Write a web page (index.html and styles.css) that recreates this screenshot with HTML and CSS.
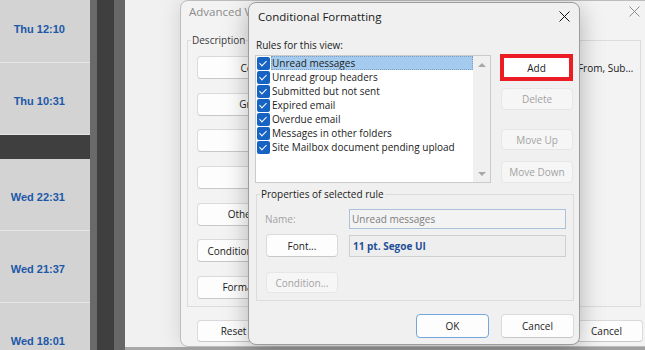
FILE: index.html
```html
<!DOCTYPE html>
<html lang="en">
<head>
  <meta charset="UTF-8" />
  <title>Conditional Formatting</title>
  <link rel="stylesheet" href="styles.css">
</head>
<body>
  <div class="app">
    <div class="msg-list">
      <div class="msg-row"><span class="msg-time">Thu 12:10</span></div>
      <div class="msg-row"><span class="msg-time">Thu 10:31</span></div>
      <div class="msg-group"></div>
      <div class="msg-row"><span class="msg-time">Wed 22:31</span></div>
      <div class="msg-row"><span class="msg-time">Wed 21:37</span></div>
      <div class="msg-row"><span class="msg-time">Wed 18:01</span></div>
    </div>

    <div class="splitter">
      <div class="split-a"></div>
      <div class="split-b"></div>
      <div class="split-c"></div>
    </div>

    <div class="workspace">
      <div class="reading"></div>
      <div class="statusbar"></div>

      <!-- dialog behind -->
      <div class="dialog dlg-advanced">
        <div class="dlg-title inactive">
          <span>Advanced View Settings: Compact</span>
          <svg class="close" width="11" height="11" viewBox="0 0 11 11"><path d="M0.5 0.5 L10.5 10.5 M10.5 0.5 L0.5 10.5" stroke="currentColor" stroke-width="1" fill="none"/></svg>
        </div>
        <div class="adv-body">
          <fieldset class="adv-group">
            <legend>Description</legend>
            <div class="adv-row"><button class="btn adv-btn">Columns...</button><span class="adv-desc">Importance, Reminder, Icon, Flag Status, Attachment, From, Sub…</span></div>
            <div class="adv-row"><button class="btn adv-btn">Group By...</button><span class="adv-desc">None</span></div>
            <div class="adv-row"><button class="btn adv-btn">Sort...</button><span class="adv-desc">Received (descending)</span></div>
            <div class="adv-row"><button class="btn adv-btn">Filter...</button><span class="adv-desc">Off</span></div>
            <div class="adv-row"><button class="btn adv-btn">Other Settings...</button><span class="adv-desc">Fonts and other Compact View settings</span></div>
            <div class="adv-row"><button class="btn adv-btn">Conditional Formatting...</button><span class="adv-desc">User defined fonts</span></div>
            <div class="adv-row"><button class="btn adv-btn">Format Columns...</button><span class="adv-desc">Specify display formats</span></div>
          </fieldset>
          <div class="adv-footer">
            <button class="btn adv-btn">Reset Current View</button>
            <button class="btn footer-btn push">OK</button>
            <button class="btn footer-btn">Cancel</button>
          </div>
        </div>
      </div>

      <!-- active dialog -->
      <div class="dialog dlg-cf">
        <div class="dlg-title">
          <span>Conditional Formatting</span>
          <svg class="close" width="11" height="11" viewBox="0 0 11 11"><path d="M0.5 0.5 L10.5 10.5 M10.5 0.5 L0.5 10.5" stroke="currentColor" stroke-width="1" fill="none"/></svg>
        </div>
        <div class="cf-body">
          <div class="cf-caption">Rules for this view:</div>
          <div class="rules">
            <div class="rule-list">
              <div class="rule-items">
                <div class="rule-item"><span class="check"></span><span class="rule-name selected">Unread messages</span></div>
                <div class="rule-item"><span class="check"></span><span class="rule-name">Unread group headers</span></div>
                <div class="rule-item"><span class="check"></span><span class="rule-name">Submitted but not sent</span></div>
                <div class="rule-item"><span class="check"></span><span class="rule-name">Expired email</span></div>
                <div class="rule-item"><span class="check"></span><span class="rule-name">Overdue email</span></div>
                <div class="rule-item"><span class="check"></span><span class="rule-name">Messages in other folders</span></div>
                <div class="rule-item"><span class="check"></span><span class="rule-name">Site Mailbox document pending upload</span></div>
              </div>
              <div class="scrollbar">
                <span class="arrow-up"></span>
                <span class="arrow-down"></span>
              </div>
            </div>
            <div class="rule-actions">
              <button class="btn btn-add">Add</button>
              <button class="btn disabled btn-delete">Delete</button>
              <button class="btn disabled btn-up">Move Up</button>
              <button class="btn disabled btn-down">Move Down</button>
            </div>
          </div>

          <fieldset class="props">
            <legend>Properties of selected rule</legend>
            <div class="props-grid">
              <span class="props-label">Name:</span>
              <div class="field name-field">Unread messages</div>
              <button class="btn font-btn">Font...</button>
              <div class="field font-field">11 pt. Segoe UI</div>
              <button class="btn disabled cond-btn">Condition...</button>
            </div>
          </fieldset>

          <div class="cf-footer">
            <button class="btn default footer-btn ok-btn">OK</button>
            <button class="btn footer-btn ok-btn">Cancel</button>
          </div>
        </div>
      </div>
    </div>
  </div>
</body>
</html>
```

FILE: styles.css
```css
* {
  box-sizing: border-box;
  margin: 0;
  padding: 0;
}

body {
  width: 645px;
  height: 350px;
  overflow: hidden;
  font-family: "Open Sans", "Segoe UI", sans-serif;
  font-size: 10px;
  color: #1b1b1b;
}

.app {
  display: flex;
  height: 350px;
}

/* message list on the left */
.msg-list {
  width: 90px;
  flex: none;
  background: #d3d3d3;
  overflow: hidden;
}

.msg-row {
  height: 72px;
  border-bottom: 1px solid #e6e6e6;
  padding: 31px 25px 0 0;
  text-align: right;
}

.msg-row:first-child {
  margin-top: -9px;
}

.msg-time {
  font: bold 11px/14px "Liberation Sans", Arial, sans-serif;
  color: #1c58a8;
}

.msg-group {
  height: 24px;
  background: #3f3f3f;
}

.splitter {
  display: flex;
  flex: none;
}

.split-a { width: 7px; background: #6a6a6a; }
.split-b { width: 17px; background: #3f3f3f; }
.split-c { width: 11px; background: #676767; }

/* outlook window area */
.workspace {
  flex: 1;
  position: relative;
  display: flex;
  flex-direction: column;
  background: #f1f1f1;
}

.reading {
  flex: 1;
}

.statusbar {
  height: 3px;
  background: #a9a9a9;
}

/* dialogs */
.dialog {
  position: absolute;
  display: flex;
  flex-direction: column;
  border: 1px solid #bdbdbd;
  border-radius: 8px;
  background: #f3f3f3;
}

.dlg-title {
  display: flex;
  align-items: center;
  flex: none;
}

.dlg-title .close {
  margin-left: auto;
}

.btn {
  font-family: inherit;
  font-size: 10px;
  color: #1b1b1b;
  background: #fdfdfd;
  border: 1px solid #dadada;
  border-bottom-color: #c8c8c8;
  border-radius: 4px;
}

.btn.disabled {
  background: #f6f6f6;
  border-color: #e6e6e6;
  color: #a3a3a3;
}

.btn.default {
  border-color: #75a6dd;
}

fieldset {
  border: 1px solid #dcdcdc;
  min-width: 0;
}

legend {
  line-height: 13px;
  padding: 0 1px;
  margin-left: -6px;
}

/* Advanced View Settings */
.dlg-advanced {
  left: 55px;
  top: 0;
  width: 478px;
  height: 347px;
  box-shadow: 0 0 22px rgba(0, 0, 0, 0.13);
}

.dlg-advanced .dlg-title {
  height: 21px;
  padding: 0 17px 0 8px;
  font-size: 11.5px;
  color: #8c8c8c;
}

.adv-body {
  padding: 0 14px 0 6px;
}

.adv-group {
  margin: 12px 2px 0 0;
  padding: 9px 0 7px 9px;
}

.adv-group legend {
  color: #3a3a3a;
}

.adv-row {
  display: flex;
  align-items: center;
  height: 23px;
}

.adv-row + .adv-row {
  margin-top: 13.67px;
}

.adv-btn {
  width: 136px;
  height: 23px;
  flex: none;
}

.adv-desc {
  margin-left: -5px;
  white-space: nowrap;
}

.adv-footer {
  display: flex;
  gap: 8px;
  margin-top: 13px;
  padding-left: 10px;
}

.adv-footer .btn {
  height: 22px;
}

.footer-btn {
  width: 73px;
}

.push {
  margin-left: auto;
}

/* Conditional Formatting */
.dlg-cf {
  left: 123px;
  top: 2px;
  width: 332px;
  height: 343px;
  background: #f0f0f0;
  border-color: #9c9c9c;
  box-shadow: 0 6px 24px rgba(0, 0, 0, 0.28);
}

.dlg-cf .dlg-title {
  height: 27px;
  padding: 0 9px;
  font-size: 11.5px;
  color: #1a1a1a;
}

.dlg-cf .close {
  color: #111;
}

.cf-body {
  padding: 0 5px 0 6px;
}

.cf-caption {
  margin-top: 8px;
  line-height: 14px;
  padding-left: 1px;
}

.rules {
  display: flex;
  margin-top: 3px;
}

.rule-list {
  display: flex;
  width: 236px;
  height: 128px;
  border: 1px solid #cacaca;
  background: #fff;
}

.rule-items {
  flex: 1;
  padding-left: 1px;
}

.rule-item {
  display: flex;
  align-items: center;
  height: 14px;
  gap: 1px;
}

.check {
  width: 13px;
  height: 13px;
  flex: none;
  border-radius: 2px;
  background: #1663c4;
  position: relative;
}

.check::after {
  content: "";
  position: absolute;
  left: 4px;
  top: 2px;
  width: 3px;
  height: 6px;
  border: solid #fff;
  border-width: 0 1px 1px 0;
  transform: rotate(45deg);
}

.rule-name {
  flex: 1;
  height: 14px;
  line-height: 14px;
  padding-left: 1px;
  white-space: nowrap;
}

.rule-name.selected {
  background: #a4cbee;
  outline: 1px dotted #7b9fc4;
  outline-offset: -1px;
}

.scrollbar {
  width: 17px;
  background: #f0f0f0;
  display: flex;
  flex-direction: column;
  justify-content: space-between;
  align-items: center;
  padding: 7px 0 6px;
}

.arrow-up,
.arrow-down {
  width: 0;
  height: 0;
  border-left: 4px solid transparent;
  border-right: 4px solid transparent;
}

.arrow-up { border-bottom: 4px solid #a8a8a8; }
.arrow-down { border-top: 4px solid #a8a8a8; }

.rule-actions {
  display: flex;
  flex-direction: column;
  width: 73px;
  margin-left: 9px;
}

.btn-add {
  height: 27px;
  margin-top: -1px;
  border: 4px solid #ec1c24;
  border-radius: 0;
  background: #fff;
}

.btn-delete,
.btn-up,
.btn-down {
  width: 72px;
  margin-left: 1px;
}

.btn-delete { height: 22px; margin-top: 7px; }
.btn-up { height: 21px; margin-top: 19px; }
.btn-down { height: 22px; margin-top: 11px; }

.props {
  margin: 5px 0 0 1px;
  padding: 8px 7px 7px 9px;
}

.props-grid {
  display: grid;
  grid-template-columns: 72px 1fr;
  column-gap: 11px;
  row-gap: 5px;
  align-items: center;
}

.props-label {
  color: #a3a3a3;
  margin-left: -1px;
}

.field {
  line-height: 18px;
  padding-left: 2px;
}

.name-field {
  height: 20px;
  border: 1px solid #abc1da;
  background: #f3f3f3;
  color: #7d7d7d;
}

.font-btn {
  height: 23px;
}

.font-field {
  height: 22px;
  line-height: 20px;
  border: 1px solid #cfcfcf;
  background: #eeeeee;
  color: #1f4f96;
  font-weight: bold;
  padding-left: 3px;
}

.cond-btn {
  height: 21px;
  margin-top: 10px;
}

.cf-footer {
  display: flex;
  justify-content: flex-end;
  gap: 12px;
  margin-top: 13px;
}

.ok-btn {
  height: 24px;
}
```
